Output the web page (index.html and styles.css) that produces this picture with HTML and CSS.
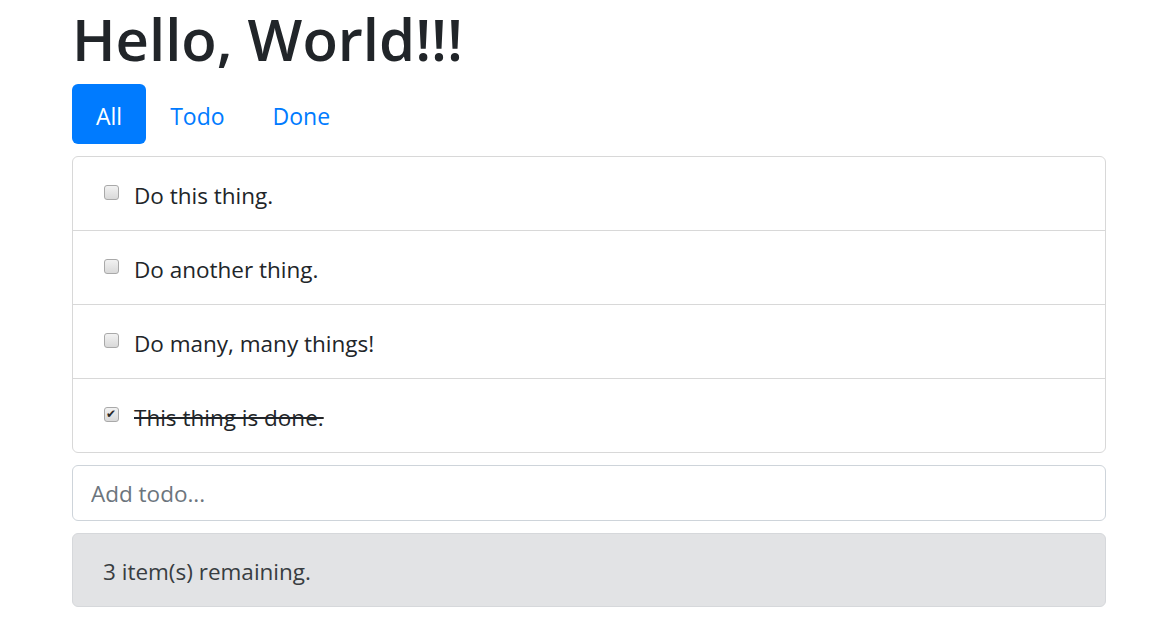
FILE: index.html
```html
<!DOCTYPE html>
<html lang="en">
<head>
<meta charset="utf-8">
<title>Todos</title>
<link rel="stylesheet" href="styles.css">
</head>
<body>
<div class="container">
  <h1 class="title">Hello, World!!!</h1>
  <nav class="pills">
    <a class="pill active" href="#">All</a>
    <a class="pill" href="#">Todo</a>
    <a class="pill" href="#">Done</a>
  </nav>
  <ul class="todo-list">
    <li class="todo-item"><label class="todo-label"><input type="checkbox" class="cb"><span class="todo-text">Do this thing.</span></label></li>
    <li class="todo-item"><label class="todo-label"><input type="checkbox" class="cb"><span class="todo-text">Do another thing.</span></label></li>
    <li class="todo-item"><label class="todo-label"><input type="checkbox" class="cb"><span class="todo-text">Do many, many things!</span></label></li>
    <li class="todo-item"><label class="todo-label"><input type="checkbox" class="cb" checked><span class="todo-text done">This thing is done.</span></label></li>
  </ul>
  <input class="add-input" type="text" placeholder="Add todo...">
  <div class="remaining">3 item(s) remaining.</div>
</div>
</body>
</html>
```

FILE: styles.css
```css
* { box-sizing: border-box; }
html, body { margin: 0; padding: 0; background: #fff; }
body {
  font-family: "Open Sans", "Noto Sans", "Liberation Sans", sans-serif;
  font-size: 22.5px;
  color: #212529;
}
.container {
  width: 1034px;
  margin-left: 72px;
}
.title {
  margin: 0 0 9px 0;
  padding-top: 3px;
  font-size: 58px;
  font-weight: 600;
  line-height: 72px;
  color: #212529;
}
.pills {
  display: flex;
  margin-bottom: 12px;
}
.pill {
  display: block;
  padding: 14px 24px 10px;
  line-height: 36px;
  font-size: 23px;
  color: #007bff;
  text-decoration: none;
  border-radius: 6px;
}
.pill.active {
  background: #007bff;
  color: #fff;
}
.todo-list {
  list-style: none;
  margin: 0;
  padding: 0;
}
.todo-item {
  border: 1px solid #d8d8d8;
  margin-bottom: -1px;
  padding: 20px 30px 16px;
  line-height: 37px;
}
.todo-item:first-child { border-radius: 6px 6px 0 0; }
.todo-item:last-child { border-radius: 0 0 6px 6px; margin-bottom: 0; }
.todo-label {
  display: flex;
  align-items: center;
  gap: 15px;
}
.cb {
  appearance: none;
  -webkit-appearance: none;
  margin: -7px 0 0 1px;
  width: 15px;
  height: 15px;
  border: 1px solid #a9a9a9;
  border-radius: 3px;
  background: linear-gradient(#f2f2f2, #d9d9d9);
  position: relative;
  flex: none;
}
.cb:checked::after {
  content: "\2714";
  position: absolute;
  left: 1px;
  top: -1px;
  font-family: "DejaVu Sans", sans-serif;
  font-size: 12px;
  font-weight: bold;
  line-height: 15px;
  color: #2a2a2a;
}
.done { text-decoration: line-through; }
.add-input {
  display: block;
  width: 100%;
  margin-top: 12px;
  height: 56px;
  padding: 0 18px;
  border: 1px solid #ced4da;
  border-radius: 6px;
  font-family: inherit;
  font-size: 22.5px;
  color: #495057;
  outline: none;
}
.add-input::placeholder { color: #6c757d; }
.remaining {
  margin-top: 12px;
  padding: 20px 30px 16px;
  line-height: 36px;
  background: #e2e3e5;
  border: 1px solid #d6d8db;
  border-radius: 6px;
  color: #383d41;
}
```
